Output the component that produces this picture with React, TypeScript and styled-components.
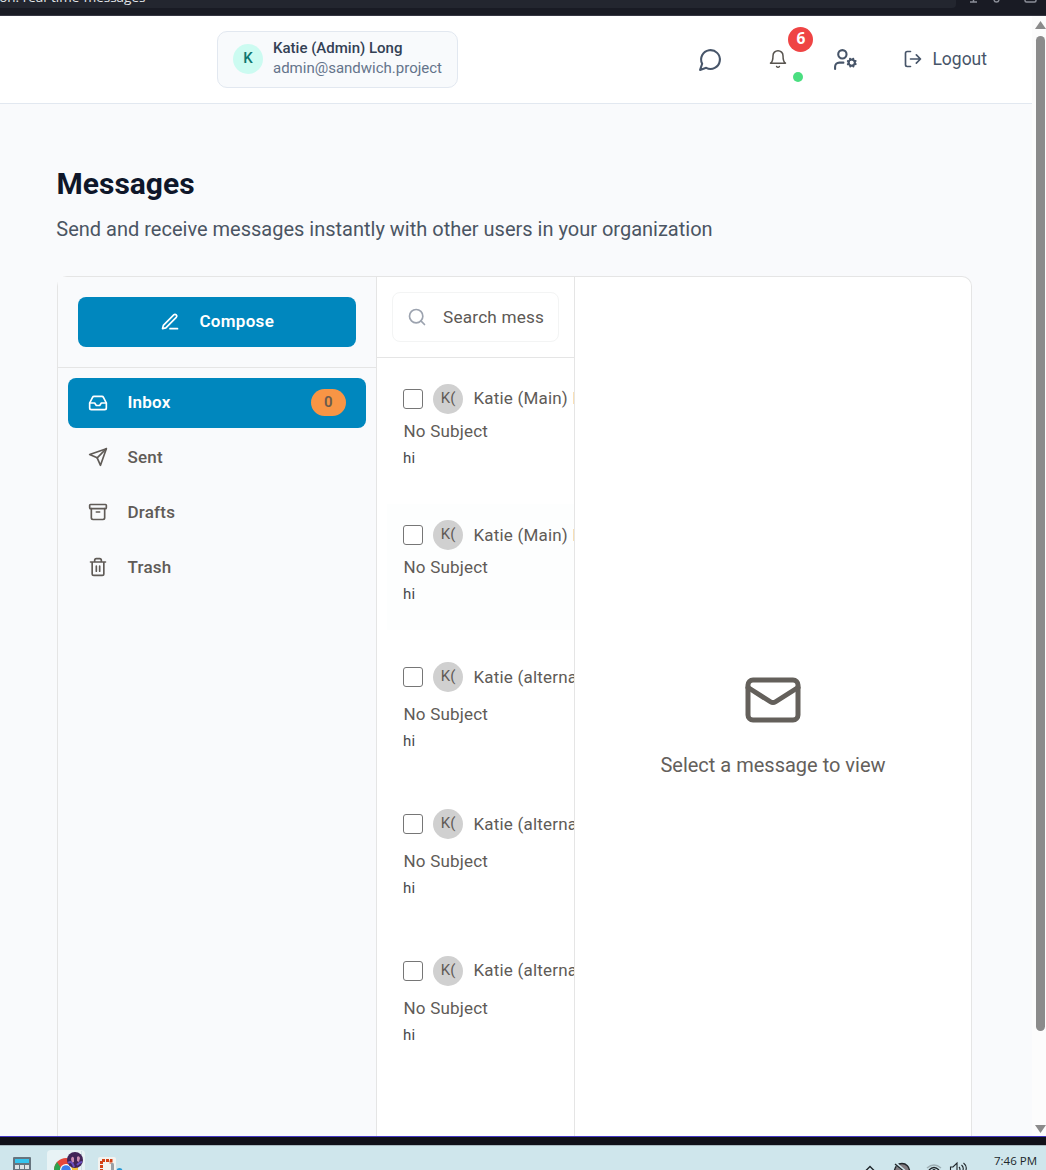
import React from 'react';
import styled, { createGlobalStyle } from 'styled-components';

const GlobalStyle = createGlobalStyle`
  * { box-sizing: border-box; }
  body { margin: 0; font-family: Roboto, "Liberation Sans", sans-serif; overflow: hidden; }
  button { font: inherit; border: 0; background: none; padding: 0; cursor: pointer; }
`;

const Screen = styled.div`
  width: 1046px; height: 1170px; display: flex; flex-direction: column; overflow: hidden; background: #f9fafc;
`;
const BrowserBar = styled.div`
  height: 16px; flex: none; background: #191b24; border-bottom: 1px solid #353642; display: flex; overflow: hidden;
`;
const AddressBar = styled.div`
  width: 956px; height: 8px; background: #23262f; border-radius: 0 0 4px 0; overflow: hidden;
  display: flex; align-items: flex-end; color: #e4e7ea;
  font: 13.5px/18px "Open Sans", sans-serif; white-space: nowrap;
`;
const AddressText = styled.span`margin: 0 0 2px -9px;`;
const Viewport = styled.div`flex: 1; min-height: 0; display: flex;`;
const Page = styled.div`
  width: 1032px; flex: none; display: flex; flex-direction: column; overflow: hidden;
`;
const Header = styled.header`
  height: 88px; flex: none; background: #fff; border-bottom: 1px solid #e2e8f0; display: flex; align-items: flex-start;
  padding: 15px 45px 0 217px; justify-content: space-between;
`;
const UserCard = styled.div`
  width: 241px; height: 57px; border: 1px solid #e2e8f0; border-radius: 10px; background: #f8fafc;
  display: flex; align-items: center; padding: 0 15px 1px; gap: 10px;
`;
const UserBadge = styled.span`
  width: 30px; height: 30px; flex: none; border-radius: 50%; background: #ccfbf1; color: #0f766e;
  display: grid; place-items: center; font-size: 15px; line-height: 18px; font-weight: 500; padding-bottom: 2px;
`;
const UserInfo = styled.div`
  display: flex; flex-direction: column; font-size: 15px; line-height: 20px; white-space: nowrap; padding-bottom: 3px;
`;
const UserName = styled.span`color: #334155; font-weight: 500;`;
const UserMail = styled.span`color: #64748b;`;
const Actions = styled.div`display: flex; align-items: center; height: 57px; color: #475569;`;
const Action = styled.button<{ $gap: number; $lift?: number }>`
  display: flex; align-items: center; margin-left: ${p => p.$gap}px; color: inherit; padding-bottom: ${p => p.$lift ?? 0}px;
`;
const BellButton = styled(Action)`position: relative; color: #57534e;`;
const Count = styled.span`
  position: absolute; left: 20px; top: -22px; width: 25px; height: 25px; border-radius: 50%;
  background: #ef4444; color: #fff; font: 700 15.5px/22px "Open Sans", sans-serif; text-align: center;
`;
const OnlineDot = styled.span`
  position: absolute; left: 25px; top: 23px; width: 10px; height: 10px; border-radius: 50%; background: #4ade80;
`;
const LogoutText = styled.span`font-size: 17.5px; letter-spacing: 0; margin-left: 9px; line-height: 20px;`;

const Main = styled.main`flex: 1; min-height: 0; display: flex; flex-direction: column; padding: 60px 60px 0 57px;`;
const Title = styled.h1`margin: 0 0 0 -.5px; font-size: 30px; line-height: 40px; font-weight: 700; color: #0f172a;`;
const Subtitle = styled.p`margin: 10px 0 32px -.7px; font-size: 20px; line-height: 30px; color: #4b5563; white-space: nowrap;`;
const Panel = styled.section`
  flex: 1; min-height: 0; width: 915px; display: flex;
  border: 1px solid #e5e5e5; border-bottom: 0; border-radius: 10px 10px 0 0; background: #fff;
`;
const Sidebar = styled.aside`width: 319px; flex: none; border-right: 1px solid #e5e5e5; background: #f9fafc;`;
const ComposeArea = styled.div`height: 91px; padding: 20px; border-bottom: 1px solid #e5e5e5;`;
const Compose = styled.button`
  width: 278px; height: 50px; border-radius: 8px; background: #0087be; color: #fff;
  display: flex; align-items: center; justify-content: center; gap: 19.5px;
  font-size: 17px; font-weight: 600; letter-spacing: .3px;
`;
const Nav = styled.nav`padding: 10px; display: flex; flex-direction: column; gap: 5px;`;
const NavItem = styled.button<{ $active?: boolean }>`
  width: 298px; height: 50px; border-radius: 8px; padding: 0 20px 1px; display: flex; align-items: center; gap: 19.5px;
  background: ${p => (p.$active ? '#0087be' : 'transparent')};
  color: ${p => (p.$active ? '#fff' : '#605b57')};
  font-size: 17px; font-weight: ${p => (p.$active ? 600 : 500)}; letter-spacing: .2px;
`;
const NavLabel = styled.span`padding-bottom: 2px;`;
const Pill = styled.span`
  margin-left: auto; width: 35px; height: 27px; border-radius: 14px; background: #f89545; color: #6b5b4d;
  font-size: 15px; font-weight: 600; line-height: 26px; text-align: center;
`;
const List = styled.div`width: 198px; flex: none; border-right: 1px solid #e5e5e5; display: flex; flex-direction: column;`;
const SearchArea = styled.div`height: 81px; flex: none; padding: 15px; border-bottom: 1px solid #e5e5e5;`;
const SearchBox = styled.div`
  height: 50px; width: 167px; border: 1px solid #f3f4f4; border-radius: 8px; display: flex; align-items: center;
  padding: 0 14px; gap: 16px; color: #9ca3af;
`;
const SearchText = styled.span`
  flex: none; color: #5d5955; font-size: 17.2px; letter-spacing: .2px; white-space: nowrap;
`;
const Rows = styled.div`padding: 10px 0 0 10px; overflow: hidden;`;
const Row = styled.article<{ $height: number; $after: number; $tint?: boolean }>`
  height: ${p => p.$height}px; margin-bottom: ${p => p.$after}px; padding: 16px; overflow: hidden;
  background: ${p => (p.$tint ? '#fdfefe' : 'transparent')};
  color: #605b57; font-size: 17px; letter-spacing: .2px; white-space: nowrap;
`;
const RowHead = styled.div<{ $gap: number }>`
  height: 30px; display: flex; align-items: center; gap: 10px; margin-bottom: ${p => p.$gap}px;
`;
const Sender = styled.span<{ $lift?: boolean }>`padding: 0 0 ${p => (p.$lift ? 2 : 0)}px .4px;`;
const Box = styled.span`width: 20px; height: 20px; flex: none; border: 1px solid #767676; border-radius: 3px; background: #fff;`;
const Avatar = styled.span`
  width: 30px; height: 30px; flex: none; border-radius: 50%; background: #d0d0d0;
  font-size: 15px; line-height: 28px; text-align: center; letter-spacing: 0;
`;
const Subject = styled.div`line-height: 26px; padding-left: .5px;`;
const Preview = styled.div`line-height: 28px; font-size: 15px; color: #46494c;`;
const Detail = styled.div`
  flex: 1; display: flex; flex-direction: column; align-items: center; padding: 393px 0 0;
  color: #64605b; font-size: 20px; line-height: 30px; gap: 20px;
`;

const ScrollTrack = styled.div`
  flex: 1; background: #fcfcfc; display: flex; flex-direction: column; align-items: flex-end; padding-top: 5px;
`;
const Arrow = styled.svg`width: 11px; height: 9px; flex: none; fill: #8b8b8b;`;
const Thumb = styled.div`width: 9px; height: 995px; margin: 6px 1px 93px 0; border-radius: 5px; background: #8b8b8b;`;
const WindowEdge = styled.div`height: 9px; flex: none; border-top: 1px solid #4438c4; background: #101018;`;
const Taskbar = styled.footer`
  height: 25px; flex: none; border-top: 1px solid #a8b9c0; background: #cfe6ec; display: flex; overflow: hidden;
`;
const Tray = styled.div`margin-left: auto; display: flex;`;
const Clock = styled.time`width: 52px; padding-top: 6px; font: 11.5px/18px "Open Sans", sans-serif; color: #20262a; white-space: nowrap; margin-left: 27px;`;

const icons: Record<string, React.ReactNode> = {
  chat: <path d="M7.9 20A9 9 0 1 0 4 16.1L2 22Z" />,
  bell: <><path d="M6 8a6 6 0 0 1 12 0c0 7 3 9 3 9H3s3-2 3-9" /><path d="M10.3 21a1.94 1.94 0 0 0 3.4 0" /></>,
  userCog: <>
    <circle cx="18" cy="15" r="3" /><circle cx="9" cy="7" r="4" /><path d="M10 15H6a4 4 0 0 0-4 4v2" />
    <path d="m21.7 16.4-.9-.3M15.2 13.9l-.9-.3M16.6 18.7l.3-.9M19.1 12.2l.3-.9M19.6 18.7l-.4-1M16.8 12.3l-.4-1M14.3 16.6l1-.4M20.7 13.8l1-.4" />
  </>,
  logout: <><path d="M9 21H5a2 2 0 0 1-2-2V5a2 2 0 0 1 2-2h4" /><path d="m16 17 5-5-5-5M21 12H9" /></>,
  pen: <><path d="M12 20h9" /><path d="M16.5 3.5a2.12 2.12 0 0 1 3 3L7 19l-4 1 1-4Z" /></>,
  inbox: <><path d="M22 12h-6l-2 3h-4l-2-3H2" /><path d="M5.45 5.11 2 12v6a2 2 0 0 0 2 2h16a2 2 0 0 0 2-2v-6l-3.45-6.89A2 2 0 0 0 16.76 4H7.24a2 2 0 0 0-1.79 1.11z" /></>,
  send: <><path d="m22 2-7 20-4-9-9-4Z" /><path d="M22 2 11 13" /></>,
  archive: <><rect x="2" y="3" width="20" height="5" rx="1" /><path d="M4 8v11a2 2 0 0 0 2 2h12a2 2 0 0 0 2-2V8M10 12h4" /></>,
  trash: <><path d="M3 6h18M19 6v14c0 1-1 2-2 2H7c-1 0-2-1-2-2V6M8 6V4c0-1 1-2 2-2h4c1 0 2 1 2 2v2M10 11v6M14 11v6" /></>,
  search: <><circle cx="11" cy="11" r="8" /><path d="m21 21-4.3-4.3" /></>,
  mail: <><rect x="2" y="4" width="20" height="16" rx="2" /><path d="m22 7-8.97 5.7a1.94 1.94 0 0 1-2.06 0L2 7" /></>,
};

const Glyph = styled.svg<{ $lift?: number }>`flex: none; margin-bottom: ${p => p.$lift ?? 0}px;`;

function Icon({ name, size = 20, weight = 2, lift }: { name: string; size?: number; weight?: number; lift?: number }) {
  return (
    <Glyph $lift={lift} width={size} height={size} viewBox="0 0 24 24" fill="none" stroke="currentColor"
      strokeWidth={weight} strokeLinecap="round" strokeLinejoin="round">{icons[name]}</Glyph>
  );
}

const folders = [
  { icon: 'inbox', label: 'Inbox', count: 0, lift: 0 },
  { icon: 'send', label: 'Sent', lift: 1 },
  { icon: 'archive', label: 'Drafts', lift: 1 },
  { icon: 'trash', label: 'Trash', lift: 1 },
];

const messages = [
  { from: 'Katie (Main) Long', height: 120, after: 16, gap: 4, lift: true },
  { from: 'Katie (Main) Long', height: 126, after: 16, gap: 4, tint: true },
  { from: 'Katie (alternate) Long', height: 131, after: 16, gap: 9 },
  { from: 'Katie (alternate) Long', height: 131, after: 16, gap: 9 },
  { from: 'Katie (alternate) Long', height: 131, after: 16, gap: 9, lift: true },
];

function ToolbarIcons() {
  return (
    <svg width="90" height="8" viewBox="0 0 90 8" fill="none" stroke="#8b8e98" strokeWidth="1.5">
      <path d="M14 2h7M17.5 0v2M38 0q.500 2 2.500 2t2.500-2M69 0v.500q0 1.500 1.500 1.500h8q1.500 0 1.500-1.500V0" />
    </svg>
  );
}

function TaskIcons() {
  return (
    <svg width="130" height="24" viewBox="0 1 130 24">
      <rect x="13" y="12" width="18" height="16" rx="1" fill="#66747e" />
      <rect x="15" y="14" width="14" height="4" fill="#35c4ee" />
      <path d="M15 20h4v4h-4zM20 20h4v4h-4zM25 20h4v4h-4z" fill="#dce3e6" />
      <rect x="47" y="5" width="38" height="28" rx="4" fill="#e8f3f5" />
      <path d="M81.500 6v20" stroke="#cfdfe4" />
      <circle cx="66" cy="25" r="12" fill="#e5473b" />
      <path d="M54 25a12 12 0 0 1 3-8l6 9z" fill="#2da44f" />
      <path d="M66 19h11a12 12 0 0 1 1 6H66z" fill="#f6c33b" />
      <circle cx="66" cy="25" r="6" fill="#fff" /><circle cx="66" cy="25" r="4.800" fill="#3b7ded" />
      <circle cx="75" cy="15" r="8" fill="#422457" />
      <path d="M71 14q1-4 3-1v4l-2 1zM77 12q2-2 3 1l-1 4-2-1z" fill="#c98bb0" />
      <path d="M68 18q4-3 6 4M77 20q3-3 5-3" stroke="#6a4fc0" strokeWidth="2" fill="none" />
      <rect x="98" y="12" width="18" height="20" rx="2" fill="#f3f3f0" />
      <path d="M101.500 27V15.500h9.500V19" fill="none" stroke="#d44115" strokeWidth="3" strokeDasharray="3 1" />
      <path d="M111 18h2q1 0 1 2v6h-3z" fill="#9aa0a6" />
      <circle cx="119.500" cy="26" r="3" fill="#2498d5" />
    </svg>
  );
}

function TrayIcons() {
  return (
    <svg width="106" height="24" viewBox="861 1146 106 24" fill="none" stroke="#20262a" strokeWidth="1.400">
      <path d="m865.500 1171 4.500-4.500 4.500 4.500" />
      <circle cx="902" cy="1171" r="7.500" fill="#817b80" />
      <path d="m895 1163 13 11" stroke="#cfe6ec" strokeWidth="3" /><path d="m895 1164 12 10" />
      <path d="M927 1168q7-6 14 0" stroke="#9daeb3" />
      <path d="M929 1170q5-5 10 0" /><circle cx="934" cy="1171" r="1.200" />
      <path d="M950.500 1172v-5h2.500l4-4v10M959 1167q2 2 0 5M961.500 1165q3.500 3 0 8M963.500 1163q5 4 1 10" strokeWidth="1.100" />
    </svg>
  );
}

export default function App() {
  return (
    <Screen>
      <GlobalStyle />
      <BrowserBar>
        <AddressBar><AddressText>tion: real-time-messages</AddressText></AddressBar>
        <ToolbarIcons />
      </BrowserBar>
      <Viewport>
        <Page>
          <Header>
            <UserCard>
              <UserBadge>K</UserBadge>
              <UserInfo><UserName>Katie (Admin) Long</UserName><UserMail>admin@sandwich.project</UserMail></UserInfo>
            </UserCard>
            <Actions>
              <Action $gap={0} aria-label="Chat"><Icon name="chat" size={25} /></Action>
              <BellButton $gap={45} $lift={2} aria-label="Notifications">
                <Icon name="bell" weight={1.8} /><Count>6</Count><OnlineDot />
              </BellButton>
              <Action $gap={45} $lift={1} aria-label="User settings"><Icon name="userCog" size={25} /></Action>
              <Action $gap={45} $lift={2}><Icon name="logout" /><LogoutText>Logout</LogoutText></Action>
            </Actions>
          </Header>
          <Main>
            <Title>Messages</Title>
            <Subtitle>Send and receive messages instantly with other users in your organization</Subtitle>
            <Panel>
              <Sidebar>
                <ComposeArea><Compose><Icon name="pen" /><NavLabel>Compose</NavLabel></Compose></ComposeArea>
                <Nav>
                  {folders.map((f, i) => (
                    <NavItem key={f.label} $active={i === 0}>
                      <Icon name={f.icon} lift={f.lift} /><NavLabel>{f.label}</NavLabel>
                      {f.count !== undefined && <Pill>{f.count}</Pill>}
                    </NavItem>
                  ))}
                </Nav>
              </Sidebar>
              <List>
                <SearchArea><SearchBox><Icon name="search" /><SearchText>Search mess</SearchText></SearchBox></SearchArea>
                <Rows>
                  {messages.map((m, i) => (
                    <Row key={i} $height={m.height} $after={m.after} $tint={m.tint}>
                      <RowHead $gap={m.gap}><Box /><Avatar>K(</Avatar><Sender $lift={m.lift}>{m.from}</Sender></RowHead>
                      <Subject>No Subject</Subject>
                      <Preview>hi</Preview>
                    </Row>
                  ))}
                </Rows>
              </List>
              <Detail><Icon name="mail" size={60} /><span>Select a message to view</span></Detail>
            </Panel>
          </Main>
        </Page>
        <ScrollTrack>
          <Arrow viewBox="0 0 11 9"><path d="M5.500 0 11 8H0z" /></Arrow>
          <Thumb />
          <Arrow viewBox="0 0 11 9"><path d="M5.500 9 11 1H0z" /></Arrow>
        </ScrollTrack>
      </Viewport>
      <WindowEdge />
      <Taskbar>
        <TaskIcons />
        <Tray><TrayIcons /><Clock>7:46 PM</Clock></Tray>
      </Taskbar>
    </Screen>
  );
}
